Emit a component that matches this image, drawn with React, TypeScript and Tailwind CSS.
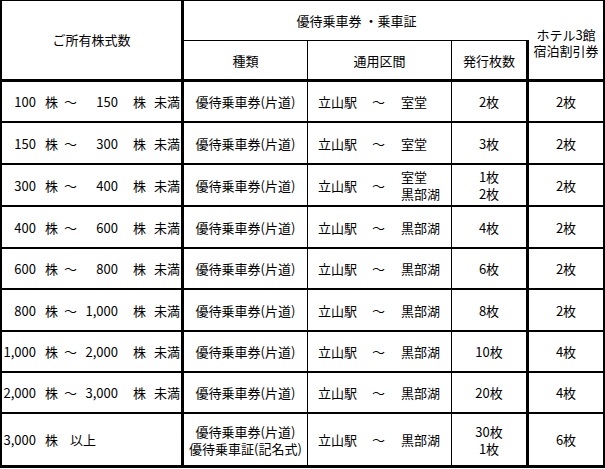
type Row = {
  a: string;
  b?: string;
  h: number;
  kind: string[];
  dest: string[];
  count: string[];
  hotel: string;
};

const rows: Row[] = [
  { a: "100", b: "150", h: 41, kind: ["優待乗車券(片道)"], dest: ["室堂"], count: ["2枚"], hotel: "2枚" },
  { a: "150", b: "300", h: 42, kind: ["優待乗車券(片道)"], dest: ["室堂"], count: ["3枚"], hotel: "2枚" },
  { a: "300", b: "400", h: 42, kind: ["優待乗車券(片道)"], dest: ["室堂", "黒部湖"], count: ["1枚", "2枚"], hotel: "2枚" },
  { a: "400", b: "600", h: 42, kind: ["優待乗車券(片道)"], dest: ["黒部湖"], count: ["4枚"], hotel: "2枚" },
  { a: "600", b: "800", h: 41, kind: ["優待乗車券(片道)"], dest: ["黒部湖"], count: ["6枚"], hotel: "2枚" },
  { a: "800", b: "1,000", h: 42, kind: ["優待乗車券(片道)"], dest: ["黒部湖"], count: ["8枚"], hotel: "2枚" },
  { a: "1,000", b: "2,000", h: 41, kind: ["優待乗車券(片道)"], dest: ["黒部湖"], count: ["10枚"], hotel: "4枚" },
  { a: "2,000", b: "3,000", h: 41, kind: ["優待乗車券(片道)"], dest: ["黒部湖"], count: ["20枚"], hotel: "4枚" },
  { a: "3,000", h: 51, kind: ["優待乗車券(片道)", "優待乗車証(記名式)"], dest: ["黒部湖"], count: ["30枚", "1枚"], hotel: "6枚" },
];

function Shares({ a, b }: { a: string; b?: string }) {
  return (
    <div className="flex items-center whitespace-nowrap">
      <span className="w-[34px] text-right">{a}</span>
      <span className="ml-[9px] w-[13px]">株</span>
      {b ? (
        <>
          <span className="ml-[6px] w-[13px]">～</span>
          <span className="w-[41px] text-right">{b}</span>
          <span className="ml-[15px] w-[13px]">株</span>
          <span className="ml-[8px]">未満</span>
        </>
      ) : (
        <span className="ml-[12px]">以上</span>
      )}
    </div>
  );
}

export default function App() {
  return (
    <div className="bg-white w-[605px] h-[469px] text-black text-[13px] leading-[17px] font-['Noto_Sans_CJK_JP',sans-serif]">
      <div className="w-[605px] border-l-2 border-r-2 border-t border-b-[3px] border-black">
        {/* header */}
        <div className="flex h-[81px] border-b-[3px] border-black">
          <div className="w-[182px] border-r-[3px] border-black flex items-center justify-center pb-[2px]">
            ご所有株式数
          </div>
          <div className="w-[345px] flex flex-col">
            <div className="h-[40px] border-b border-black flex items-center justify-center">
              優待乗車券 ・乗車証
            </div>
            <div className="flex flex-1">
              <div className="w-[124px] border-r border-black flex items-center justify-center">種類</div>
              <div className="w-[144px] border-r border-black flex items-center justify-center">通用区間</div>
              <div className="w-[77px] border-r-[3px] border-black flex items-center justify-center">発行枚数</div>
            </div>
          </div>
          <div className="w-[74px] flex flex-col items-center justify-center pt-[5px] leading-[16px]">
            <span>ホテル3館</span>
            <span>宿泊割引券</span>
          </div>
        </div>

        {rows.map((r, i) => (
          <div
            key={i}
            className={`flex ${i < rows.length - 1 ? "border-b-2 border-black" : ""}`}
            style={{ height: r.h }}
          >
            <div className="w-[182px] border-r-[3px] border-black flex items-center">
              <Shares a={r.a} b={r.b} />
            </div>
            <div className="w-[124px] border-r border-black flex flex-col items-center justify-center whitespace-nowrap">
              {r.kind.map((k) => (
                <span key={k} className="block">{k}</span>
              ))}
            </div>
            <div className="w-[144px] border-r border-black flex items-center pl-[10px]">
              <span className="w-[54px]">立山駅</span>
              <span className="w-[29px]">～</span>
              <div className="flex flex-col">
                {r.dest.map((d) => (
                  <span key={d} className="block">{d}</span>
                ))}
              </div>
            </div>
            <div className="w-[77px] border-r-[3px] border-black flex flex-col items-center justify-center">
              {r.count.map((c) => (
                <span key={c} className="block">{c}</span>
              ))}
            </div>
            <div className="w-[74px] flex items-center justify-center">{r.hotel}</div>
          </div>
        ))}
      </div>
    </div>
  );
}
